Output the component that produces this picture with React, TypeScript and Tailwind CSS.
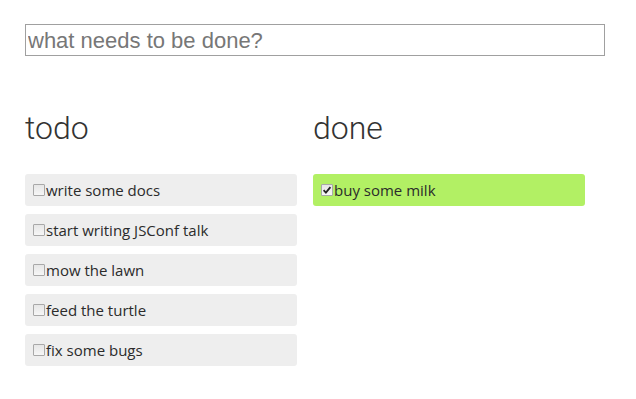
import { useState } from 'react'

type Todo = { id: number; text: string; done: boolean }

const initial: Todo[] = [
  { id: 1, text: 'write some docs', done: false },
  { id: 2, text: 'start writing JSConf talk', done: false },
  { id: 3, text: 'buy some milk', done: true },
  { id: 4, text: 'mow the lawn', done: false },
  { id: 5, text: 'feed the turtle', done: false },
  { id: 6, text: 'fix some bugs', done: false },
]

function Item({ todo, onToggle }: { todo: Todo; onToggle: (id: number) => void }) {
  return (
    <li
      className={
        'flex h-8 items-center rounded-[3px] pl-2 text-[15px] text-[#2b2b2b] ' +
        (todo.done ? 'bg-[#b2f064]' : 'bg-[#eeeeee]')
      }
    >
      <span className="relative mr-px flex h-3 w-3">
        <input
          type="checkbox"
          checked={todo.done}
          onChange={() => onToggle(todo.id)}
          className="m-0 h-3 w-3 appearance-none rounded-[1px] border border-[#a8a8a8] bg-gradient-to-b from-[#e6e6e6] to-[#f6f6f6]"
        />
        {todo.done && (
          <svg
            viewBox="0 0 12 12"
            className="pointer-events-none absolute inset-0 h-3 w-3"
          >
            <path d="M2.6 6.2 L4.9 8.6 L9.4 3.2" fill="none" stroke="#222" strokeWidth="1.8" />
          </svg>
        )}
      </span>
      <span>{todo.text}</span>
    </li>
  )
}

export default function App() {
  const [todos, setTodos] = useState(initial)
  const [text, setText] = useState('')

  const toggle = (id: number) =>
    setTodos(todos.map((t) => (t.id === id ? { ...t, done: !t.done } : t)))

  return (
    <div className="min-h-[399px] bg-white px-[25px] pt-6 font-['Open_Sans',sans-serif]">
      <form
        onSubmit={(e) => {
          e.preventDefault()
          if (!text.trim()) return
          setTodos([...todos, { id: Date.now(), text, done: false }])
          setText('')
        }}
      >
        <input
          value={text}
          onChange={(e) => setText(e.target.value)}
          placeholder="what needs to be done?"
          className="block h-8 w-[580px] border border-[#a0a0a0] px-0.5 font-['Liberation_Sans',Arial,sans-serif] text-[22px] text-[#333] outline-none placeholder:text-[#777]"
        />
      </form>
      <div className="mt-14 grid grid-cols-[272px_272px] gap-x-4">
        <div>
          <h2 className="mb-[30px] font-['Roboto',sans-serif] text-[32px] leading-[32px] font-light text-[#333]">todo</h2>
          <ul className="flex flex-col gap-2">
            {todos.filter((t) => !t.done).map((t) => (
              <Item key={t.id} todo={t} onToggle={toggle} />
            ))}
          </ul>
        </div>
        <div>
          <h2 className="mb-[30px] font-['Roboto',sans-serif] text-[32px] leading-[32px] font-light text-[#333]">done</h2>
          <ul className="flex flex-col gap-2">
            {todos.filter((t) => t.done).map((t) => (
              <Item key={t.id} todo={t} onToggle={toggle} />
            ))}
          </ul>
        </div>
      </div>
    </div>
  )
}
